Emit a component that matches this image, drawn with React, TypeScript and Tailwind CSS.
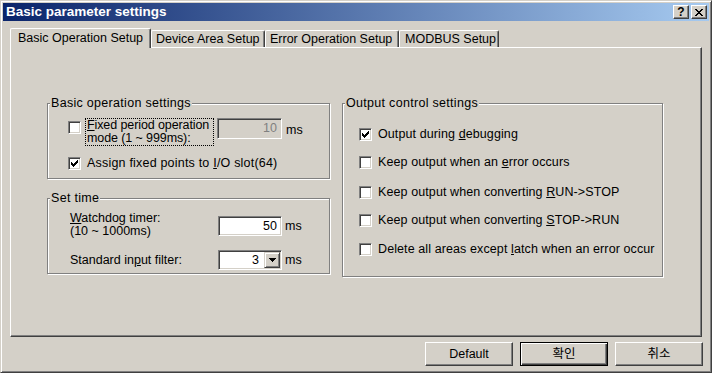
import React from "react";

const FONT = { fontFamily: '"Liberation Sans", "Noto Sans CJK KR", Arial, sans-serif' };

function Check({ checked }: { checked?: boolean }) {
  return (
    <span className="relative inline-block w-[13px] h-[13px] shrink-0 bg-white border border-t-[#808080] border-l-[#808080] border-b-white border-r-white shadow-[inset_1px_1px_0_#404040,inset_-1px_-1px_0_#d4d0c8]">
      {checked && (
        <svg width="13" height="13" viewBox="0 0 13 13" className="absolute -left-[1px] -top-[1px]" shapeRendering="crispEdges">
          <path
            d="M3 5h1v3H3z M4 6h1v3H4z M5 7h1v3H5z M6 6h1v3H6z M7 5h1v3H7z M8 4h1v3H8z M9 3h1v3H9z"
            fill="#000"
          />
        </svg>
      )}
    </span>
  );
}

function U({ children }: { children: React.ReactNode }) {
  return <span className="underline underline-offset-[1px] decoration-1">{children}</span>;
}

function Group({ title, className, children }: { title: string; className: string; children?: React.ReactNode }) {
  return (
    <div
      className={
        "relative border border-[#808080] shadow-[1px_1px_0_#ffffff,inset_1px_1px_0_#ffffff] " + className
      }
    >
      <span className="absolute left-[2px] -top-[9px] px-[1px] bg-[#d4d0c8] leading-[16px] tracking-[0.3px]">{title}</span>
      {children}
    </div>
  );
}

function Button({ children, def }: { children: React.ReactNode; def?: boolean }) {
  return (
    <div
      className={
        "w-[88px] h-[24px] flex items-center justify-center bg-[#d4d0c8] " +
        (def
          ? "border border-black shadow-[inset_1px_1px_0_#ffffff,inset_-1px_-1px_0_#404040,inset_-2px_-2px_0_#808080]"
          : "border border-t-white border-l-white border-r-[#404040] border-b-[#404040] shadow-[inset_-1px_-1px_0_#808080]")
      }
    >
      {children}
    </div>
  );
}

function TitleBtn({ children }: { children: React.ReactNode }) {
  return (
    <div className="w-[16px] h-[14px] flex items-center justify-center bg-[#d4d0c8] border border-t-white border-l-white border-r-[#404040] border-b-[#404040] shadow-[inset_-1px_-1px_0_#808080]">
      {children}
    </div>
  );
}

export default function App() {
  return (
    <div
      style={FONT}
      className="w-[712px] h-[373px] bg-[#d4d0c8] border border-t-[#d4d0c8] border-l-[#d4d0c8] border-r-[#404040] border-b-[#404040] shadow-[inset_1px_1px_0_#ffffff,inset_-1px_-1px_0_#808080] p-[2px] text-[12.5px] text-black flex flex-col"
    >
      {/* Title bar */}
      <div className="h-[18px] flex items-center justify-between bg-[linear-gradient(to_right,#0a246a,#a6caf0)] pl-[3px] pr-[2px]">
        <span className="text-white font-bold text-[13.5px] leading-none">Basic parameter settings</span>
        <div className="flex gap-[2px]">
          <TitleBtn>
            <span className="font-bold text-[12px] leading-none -mt-[1px]">?</span>
          </TitleBtn>
          <TitleBtn>
            <svg width="8" height="7" viewBox="0 0 8 7" shapeRendering="crispEdges">
              <path d="M0 0h2v1H0z M6 0h2v1H6z M1 1h2v1H1z M5 1h2v1H5z M2 2h4v1H2z M3 3h2v1H3z M2 4h4v1H2z M1 5h2v1H1z M5 5h2v1H5z M0 6h2v1H0z M6 6h2v1H6z" fill="#000" />
            </svg>
          </TitleBtn>
        </div>
      </div>

      {/* Tabs */}
      <div className="mt-[7px] ml-[7px] flex items-end h-[19px]">
        <div className="relative z-10 w-[141px] h-[20px] -mb-[1px] bg-[#d4d0c8] border-l border-t border-r border-l-white border-t-white border-r-[#404040] rounded-t-[2px] shadow-[inset_-1px_0_0_#808080] flex items-start pt-[1px] pl-[7px] leading-[16px]">
          Basic Operation Setup
        </div>
        <div className="w-[114px] h-[17px] border-l border-t border-r border-l-white border-t-white border-r-[#404040] rounded-t-[2px] shadow-[inset_-1px_0_0_#808080] flex items-start pt-[0px] pl-[4px] leading-[16px]">
          Device Area Setup
        </div>
        <div className="w-[134px] h-[17px] border-l border-t border-r border-l-white border-t-white border-r-[#404040] rounded-t-[2px] shadow-[inset_-1px_0_0_#808080] flex items-start pt-[0px] pl-[4px] leading-[16px]">
          Error Operation Setup
        </div>
        <div className="w-[100px] h-[17px] border-l border-t border-r border-l-white border-t-white border-r-[#404040] rounded-t-[2px] shadow-[inset_-1px_0_0_#808080] flex items-start pt-[0px] pl-[5px] leading-[16px]">
          MODBUS Setup
        </div>
      </div>

      {/* Panel */}
      <div className="ml-[7px] w-[692px] h-[290px] border border-t-white border-l-white border-r-[#404040] border-b-[#404040] shadow-[inset_-1px_-1px_0_#808080] pt-[55px] pl-[36px] flex gap-[12px] items-start">
        {/* Left column */}
        <div className="flex flex-col gap-[19px]">
          <Group title="Basic operation settings" className="w-[283px] h-[76px] pt-[14px] pl-[20px]">
            <div className="flex items-start h-[25px]">
              <div className="mt-[3px]">
                <Check />
              </div>
              <div className="ml-[4px] w-[129px] h-[28px] border border-dotted border-black pl-[1px] leading-[13px] -tracking-[0.1px]">
                <div>
                  <U>F</U>ixed period operation
                </div>
                <div>mode (1 ~ 999ms):</div>
              </div>
              <div className="ml-[3px] w-[65px] h-[21px] border border-t-[#808080] border-l-[#808080] border-b-white border-r-white shadow-[inset_1px_1px_0_#404040,inset_-1px_-1px_0_#d4d0c8] flex items-center justify-end pr-[4px] text-[#808080]">
                10
              </div>
              <span className="ml-[4px] mt-[3px]">ms</span>
            </div>
            <div className="flex items-center mt-[11px]">
              <Check checked />
              <span className="ml-[6px] tracking-[0.2px]">
                Assign fixed points to <U>I</U>/O slot(64)
              </span>
            </div>
          </Group>

          <Group title="Set time" className="w-[283px] h-[76px] pt-[17px] pl-[22px]">
            <div className="flex items-start">
              <div className="w-[148px] leading-[13px] -mt-[4px]">
                <div>
                  <U>W</U>atchdog timer:
                </div>
                <div>(10 ~ 1000ms)</div>
              </div>
              <div className="w-[64px] h-[20px] border border-t-[#808080] border-l-[#808080] border-b-white border-r-white shadow-[inset_1px_1px_0_#404040,inset_-1px_-1px_0_#d4d0c8] bg-white flex items-center justify-end pr-[4px]">
                50
              </div>
              <span className="ml-[3px] mt-[1px]">ms</span>
            </div>
            <div className="flex items-center mt-[12px]">
              <div className="w-[148px]">
                Standard in<U>p</U>ut filter:
              </div>
              <div className="w-[64px] h-[20px] border border-t-[#808080] border-l-[#808080] border-b-white border-r-white shadow-[inset_1px_1px_0_#404040,inset_-1px_-1px_0_#d4d0c8] bg-white flex items-center justify-end p-[1px]">
                <span className="mr-[5px]">3</span>
                <div className="w-[16px] h-[16px] bg-[#d4d0c8] border border-t-[#d4d0c8] border-l-[#d4d0c8] border-r-[#404040] border-b-[#404040] shadow-[inset_1px_1px_0_#ffffff,inset_-1px_-1px_0_#808080] flex items-center justify-center">
                  <svg width="7" height="4" viewBox="0 0 7 4" shapeRendering="crispEdges">
                    <path d="M0 0h7v1H0z M1 1h5v1H1z M2 2h3v1H2z M3 3h1v1H3z" fill="#000" />
                  </svg>
                </div>
              </div>
              <span className="ml-[3px]">ms</span>
            </div>
          </Group>
        </div>

        {/* Right column */}
        <Group title="Output control settings" className="w-[321px] h-[174px] pt-[24px] pl-[16px]">
          <div className="flex flex-col gap-[15px] tracking-[0.1px]">
            <div className="flex items-center h-[13px]">
              <Check checked />
              <span className="ml-[6px]">
                Output during <U>d</U>ebugging
              </span>
            </div>
            <div className="flex items-center h-[13px]">
              <Check />
              <span className="ml-[6px]">
                Keep output when an <U>e</U>rror occurs
              </span>
            </div>
            <div className="flex items-center h-[13px] mt-[2px]">
              <Check />
              <span className="ml-[6px]">
                Keep output when converting <U>R</U>UN-&gt;STOP
              </span>
            </div>
            <div className="flex items-center h-[13px]">
              <Check />
              <span className="ml-[6px]">
                Keep output when converting <U>S</U>TOP-&gt;RUN
              </span>
            </div>
            <div className="flex items-center h-[13px] mt-[1px]">
              <Check />
              <span className="ml-[6px] whitespace-nowrap">
                Delete all areas except <U>l</U>atch when an error occur
              </span>
            </div>
          </div>
        </Group>
      </div>

      {/* Buttons */}
      <div className="mt-[5px] mr-[6px] flex justify-end gap-[7px]">
        <Button>Default</Button>
        <Button def>확인</Button>
        <Button>취소</Button>
      </div>
    </div>
  );
}
